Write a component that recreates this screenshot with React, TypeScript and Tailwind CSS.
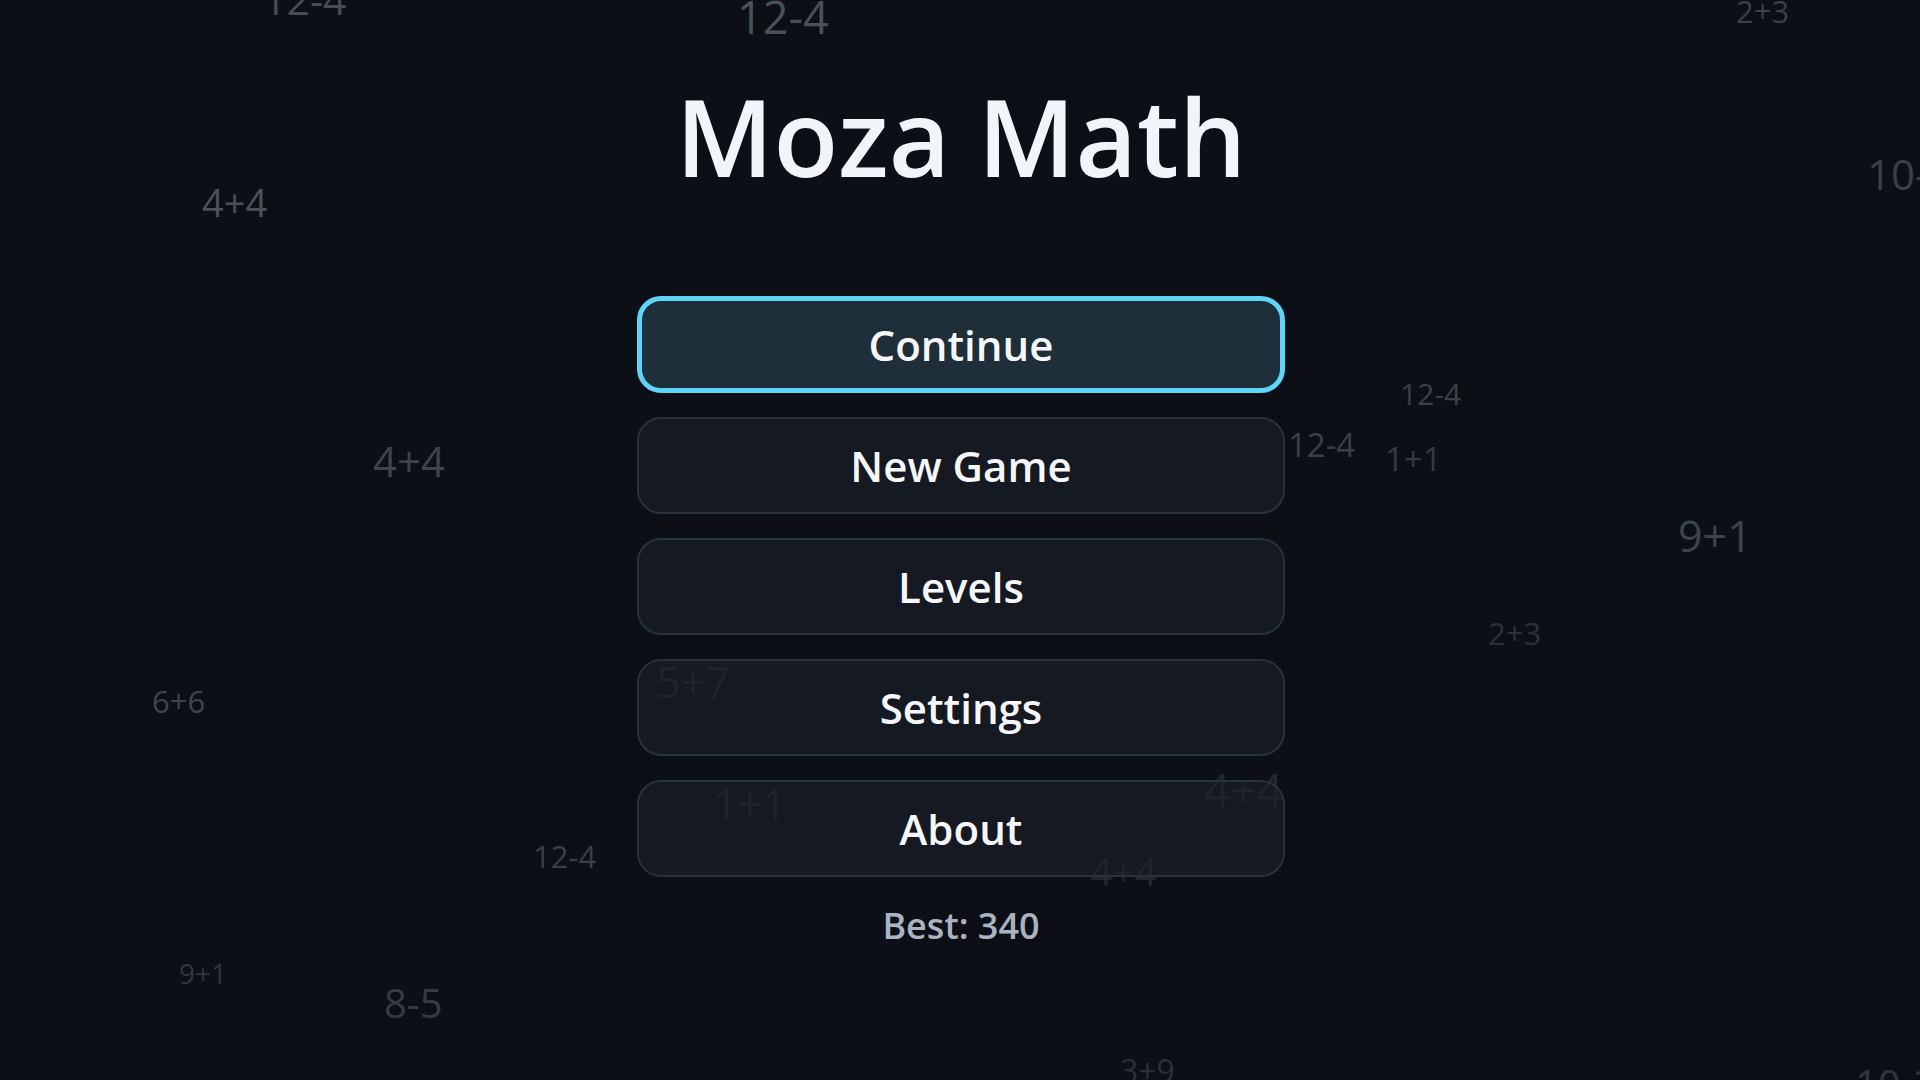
import React from "react";

type Drift = { text: string; x: number; y: number; size: number; color: string };

// Floating practice sums drifting behind the menu
const drifts: Drift[] = [
  { text: "12-4", x: 263, y: -21, size: 41, color: "#464c55" },
  { text: "12-4", x: 737, y: -6, size: 45, color: "#4a5058" },
  { text: "2+3", x: 1736, y: -4, size: 31, color: "#3a4048" },
  { text: "10-3", x: 1867, y: 153, size: 42, color: "#3a4048" },
  { text: "4+4", x: 202, y: 183, size: 38, color: "#4b5159" },
  { text: "4+4", x: 373, y: 440, size: 42, color: "#3d434b" },
  { text: "12-4", x: 1400, y: 379, size: 30, color: "#3a4048" },
  { text: "12-4", x: 1288, y: 428, size: 33, color: "#3a4048" },
  { text: "1+1", x: 1385, y: 442, size: 33, color: "#343a42" },
  { text: "9+1", x: 1678, y: 514, size: 43, color: "#3d434b" },
  { text: "2+3", x: 1488, y: 618, size: 31, color: "#2c3139" },
  { text: "5+7", x: 656, y: 660, size: 43, color: "#24282e" },
  { text: "6+6", x: 152, y: 686, size: 31, color: "#3f454d" },
  { text: "1+1", x: 713, y: 782, size: 43, color: "#24282e" },
  { text: "4+4", x: 1204, y: 766, size: 46, color: "#24282e" },
  { text: "4+4", x: 1090, y: 851, size: 39, color: "#24282e" },
  { text: "12-4", x: 533, y: 841, size: 31, color: "#3a4048" },
  { text: "9+1", x: 179, y: 959, size: 28, color: "#30363e" },
  { text: "8-5", x: 384, y: 983, size: 40, color: "#353b43" },
  { text: "3+9", x: 1120, y: 1055, size: 32, color: "#2a3037" },
  { text: "10-2", x: 1855, y: 1064, size: 40, color: "#2f353c" },
];

const items = ["Continue", "New Game", "Levels", "Settings", "About"];

function MenuButton({ label, active }: { label: string; active?: boolean }) {
  return (
    <button
      className={
        active
          ? "flex h-[97px] w-[648px] items-center justify-center rounded-[24px] border-[5px] border-[#5cd5f8] bg-[#1f2f3a] text-[42px] leading-none font-semibold text-[#f5f7fa]"
          : "flex h-[97px] w-[648px] items-center justify-center rounded-[24px] border-2 border-[#28313d] bg-[#1a202b]/60 text-[42px] leading-none font-semibold text-[#f5f7fa]"
      }
    >
      {label}
    </button>
  );
}

export default function App() {
  return (
    <div
      className="relative h-screen w-screen overflow-hidden bg-[#0c0f16]"
      style={{ fontFamily: '"Open Sans", "Noto Sans", sans-serif' }}
    >
      <div className="pointer-events-none absolute inset-0">
        {drifts.map((d, i) => (
          <span
            key={i}
            className="absolute leading-none font-medium whitespace-nowrap"
            style={{ left: d.x, top: d.y, fontSize: d.size, color: d.color }}
          >
            {d.text}
          </span>
        ))}
      </div>

      <div className="relative z-10 flex flex-col items-center pt-[83px] pl-[2px]">
        <h1 className="text-[106px] leading-none font-semibold text-[#f1f5f9]">Moza Math</h1>
        <div className="mt-[107px] flex flex-col gap-[24px]">
          {items.map((label, i) => (
            <MenuButton key={label} label={label} active={i === 0} />
          ))}
        </div>
        <p className="mt-[31px] text-[36px] leading-none font-semibold text-[#a9b3c1]">Best: 340</p>
      </div>
    </div>
  );
}
